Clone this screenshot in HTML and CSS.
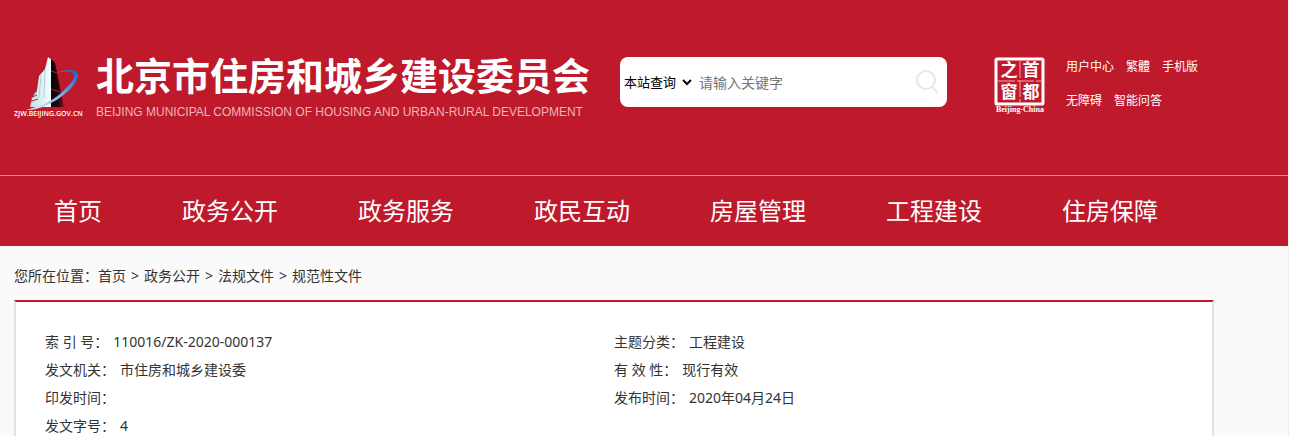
FILE: index.html
```
<!DOCTYPE html>
<html lang="zh-CN">
<head>
  <meta charset="UTF-8">
  <meta name="viewport" content="width=device-width, initial-scale=1.0">
  <title>北京市住房和城乡建设委员会</title>
  <link rel="stylesheet" href="styles.css">
</head>
<body>
  <header class="header">
    <div class="header-top">
      <a class="logo" href="#">
        <svg class="logo-mark" width="72" height="62" viewBox="0 0 72 62" aria-hidden="true">
          <defs>
            <linearGradient id="tower" x1="0" y1="0" x2="1" y2="0">
              <stop offset="0" stop-color="#c3dfe1"/>
              <stop offset="1" stop-color="#f2ffff"/>
            </linearGradient>
            <linearGradient id="shade" x1="0" y1="0" x2="1" y2="0">
              <stop offset="0" stop-color="#080203"/>
              <stop offset="0.6" stop-color="#210609"/>
              <stop offset="1" stop-color="#80101d"/>
            </linearGradient>
            <linearGradient id="ring" x1="0" y1="1" x2="1" y2="0">
              <stop offset="0" stop-color="#e8f5ff"/>
              <stop offset="0.45" stop-color="#8cb9ea"/>
              <stop offset="1" stop-color="#1462c5"/>
            </linearGradient>
          </defs>
          <path d="M35 1 L41 7 L50 51 L35 51 Z" fill="url(#shade)"/>
          <path d="M34 1 L37 3 L37 51 L16 51 L18 42 L23 34 L25 20 L31 13 Z" fill="url(#tower)"/>
          <path d="M27 19 L25 42 M31 14 L30 42" stroke="#b4d0d4" stroke-width="1" fill="none"/>
          <path d="M17 38 L23 35 M16 42 L23 39 M15 46 L24 43" stroke="#a62f3b" stroke-width="1" fill="none"/>
          <path d="M37 15 L43 17 M37 33 L46 36" stroke="#a82431" stroke-width="1" fill="none"/>
          <path d="M43 17 C54 12 64 14 64 19 C64 28 49 42 33 49 C25 53 18 54 12 54 C24 51 37 46 46 38 C55 30 62 22 60 18 C58 15 51 15 43 17 Z" fill="url(#ring)"/>
          <text class="logo-url" x="0" y="60">ZJW.BEIJING.GOV.CN</text>
        </svg>
        <span class="logo-text">
          <span class="logo-cn">北京市住房和城乡建设委员会</span>
          <span class="logo-en">BEIJING MUNICIPAL COMMISSION OF HOUSING AND URBAN-RURAL DEVELOPMENT</span>
        </span>
      </a>

      <form class="search">
        <select class="search-type" aria-label="查询范围">
          <option>本站查询</option>
          <option>全站查询</option>
        </select>
        <input class="search-input" type="text" placeholder="请输入关键字" aria-label="关键字">
        <button class="search-btn" type="button" aria-label="搜索">
          <svg width="24" height="24" viewBox="0 0 24 24">
            <circle cx="11" cy="10" r="9" fill="none" stroke="#e6e6e6" stroke-width="2"/>
            <path d="M17 17 L22 22" stroke="#e6e6e6" stroke-width="2" stroke-linecap="round"/>
          </svg>
        </button>
      </form>

      <a class="capital" href="#" aria-label="首都之窗">
        <svg width="56" height="58" viewBox="0 0 56 58">
          <rect x="4" y="3" width="47" height="45" rx="1" fill="none" stroke="#fff" stroke-width="3"/>
          <path d="M28 5 V46 M6 25 H50" stroke="#e9a7ad" stroke-width="1" stroke-dasharray="17 2"/>
          <text class="seal-char" x="17" y="20">之</text>
          <text class="seal-char" x="39" y="20">首</text>
          <text class="seal-char" x="17" y="42">窗</text>
          <text class="seal-char" x="39" y="42">都</text>
          <text class="seal-en" x="28" y="56">Beijing-China</text>
        </svg>
      </a>

      <div class="links">
        <div class="links-row">
          <a href="#">用户中心</a>
          <a href="#" lang="zh-TW">繁體</a>
          <a href="#">手机版</a>
        </div>
        <div class="links-row">
          <a href="#">无障碍</a>
          <a href="#">智能问答</a>
        </div>
      </div>
    </div>

    <nav class="nav">
      <a href="#">首页</a>
      <a href="#">政务公开</a>
      <a href="#">政务服务</a>
      <a href="#">政民互动</a>
      <a href="#">房屋管理</a>
      <a href="#">工程建设</a>
      <a href="#">住房保障</a>
    </nav>
  </header>

  <main class="main">
    <div class="crumbs">
      您所在位置：<a href="#">首页</a><span>&gt;</span><a href="#">政务公开</a><span>&gt;</span><a href="#">法规文件</a><span>&gt;</span><a href="#">规范性文件</a>
    </div>

    <div class="doc-info">
      <ul>
        <li>索 引 号：<span>110016/ZK-2020-000137</span></li>
        <li>主题分类：<span>工程建设</span></li>
        <li>发文机关：<span>市住房和城乡建设委</span></li>
        <li>有 效 性：<span>现行有效</span></li>
        <li>印发时间：</li>
        <li>发布时间：<span>2020年04月24日</span></li>
        <li>发文字号：<span>4</span></li>
      </ul>
    </div>
  </main>
</body>
</html>
```

FILE: styles.css
```
* {
  box-sizing: border-box;
}
body {
  margin: 0;
  border-right: 1px solid #f0f0f0;
  background: #fafafa;
  color: #333;
  font-family: "Noto Sans", "Noto Sans CJK SC", sans-serif;
  font-size: 14px;
}
a {
  color: inherit;
  text-decoration: none;
}

/* header */
.header {
  background: #be1a2c;
  color: #fff;
}
.header-top {
  display: flex;
  align-items: flex-start;
  height: 175px;
  padding: 50px 14px 0;
}
.logo {
  display: flex;
  flex: none;
  width: 606px;
  margin-top: 6px;
}
.logo-mark {
  flex: none;
  margin-right: 10px;
}
.logo-url {
  font: 600 7px "Open Sans", sans-serif;
  fill: #fff;
}
.logo-text {
  display: flex;
  flex-direction: column;
  white-space: nowrap;
}
.logo-cn {
  font-family: "Noto Sans CJK SC", sans-serif;
  font-size: 38px;
  font-weight: bold;
  line-height: 36px;
}
.logo-en {
  margin-top: 10px;
  color: #efb5bb;
  font-family: "Liberation Sans", sans-serif;
  font-size: 12px;
  line-height: 20px;
}

/* search */
.search {
  display: flex;
  align-items: center;
  flex: none;
  width: 327px;
  height: 50px;
  margin-top: 7px;
  background: #fff;
  border-radius: 8px;
}
.search-type {
  width: 75px;
  height: 30px;
  padding: 0;
  border: none;
  background: #fff;
  color: #000;
  font-family: inherit;
  font-size: 13px;
}
.search-input {
  flex: 1;
  min-width: 0;
  height: 40px;
  padding: 0 4px;
  border: none;
  outline: none;
  font-family: inherit;
  font-size: 14px;
}
.search-input::placeholder {
  color: #757575;
}
.search-btn {
  display: flex;
  margin-right: 8px;
  padding: 0;
  border: none;
  background: none;
  cursor: pointer;
}

.capital {
  flex: none;
  margin: 6px 0 0 45px;
}
.seal-char {
  font: bold 17px "Noto Sans CJK SC", sans-serif;
  fill: #fff;
  text-anchor: middle;
}
.seal-en {
  font: bold 8px "Liberation Serif", serif;
  fill: #fff;
  text-anchor: middle;
}
.links {
  margin-left: 18px;
  font-size: 12px;
  line-height: 34px;
}
.links-row {
  display: flex;
  gap: 12px;
  white-space: nowrap;
}

.nav {
  display: flex;
  padding: 0 14px;
  border-top: 1px solid #dc8b8f;
}
.nav a {
  padding: 0 40px;
  font-size: 24px;
  line-height: 70px;
  white-space: nowrap;
}

/* content */
.main {
  max-width: 1214px;
  padding-left: 14px;
}
.crumbs {
  padding: 15px 0 9px;
  line-height: 30px;
}
.crumbs span {
  margin: 0 5px;
}
.doc-info {
  padding: 26px 29px;
  background: #fff;
  border: 2px solid #e2e2da;
  border-top-color: #be1a2c;
}
.doc-info ul {
  display: grid;
  grid-template-columns: 1fr 1fr;
  margin: 0;
  padding: 0;
  list-style: none;
}
.doc-info li {
  line-height: 28px;
  min-height: 28px;
}
.doc-info span {
  margin-left: 5px;
}
```
